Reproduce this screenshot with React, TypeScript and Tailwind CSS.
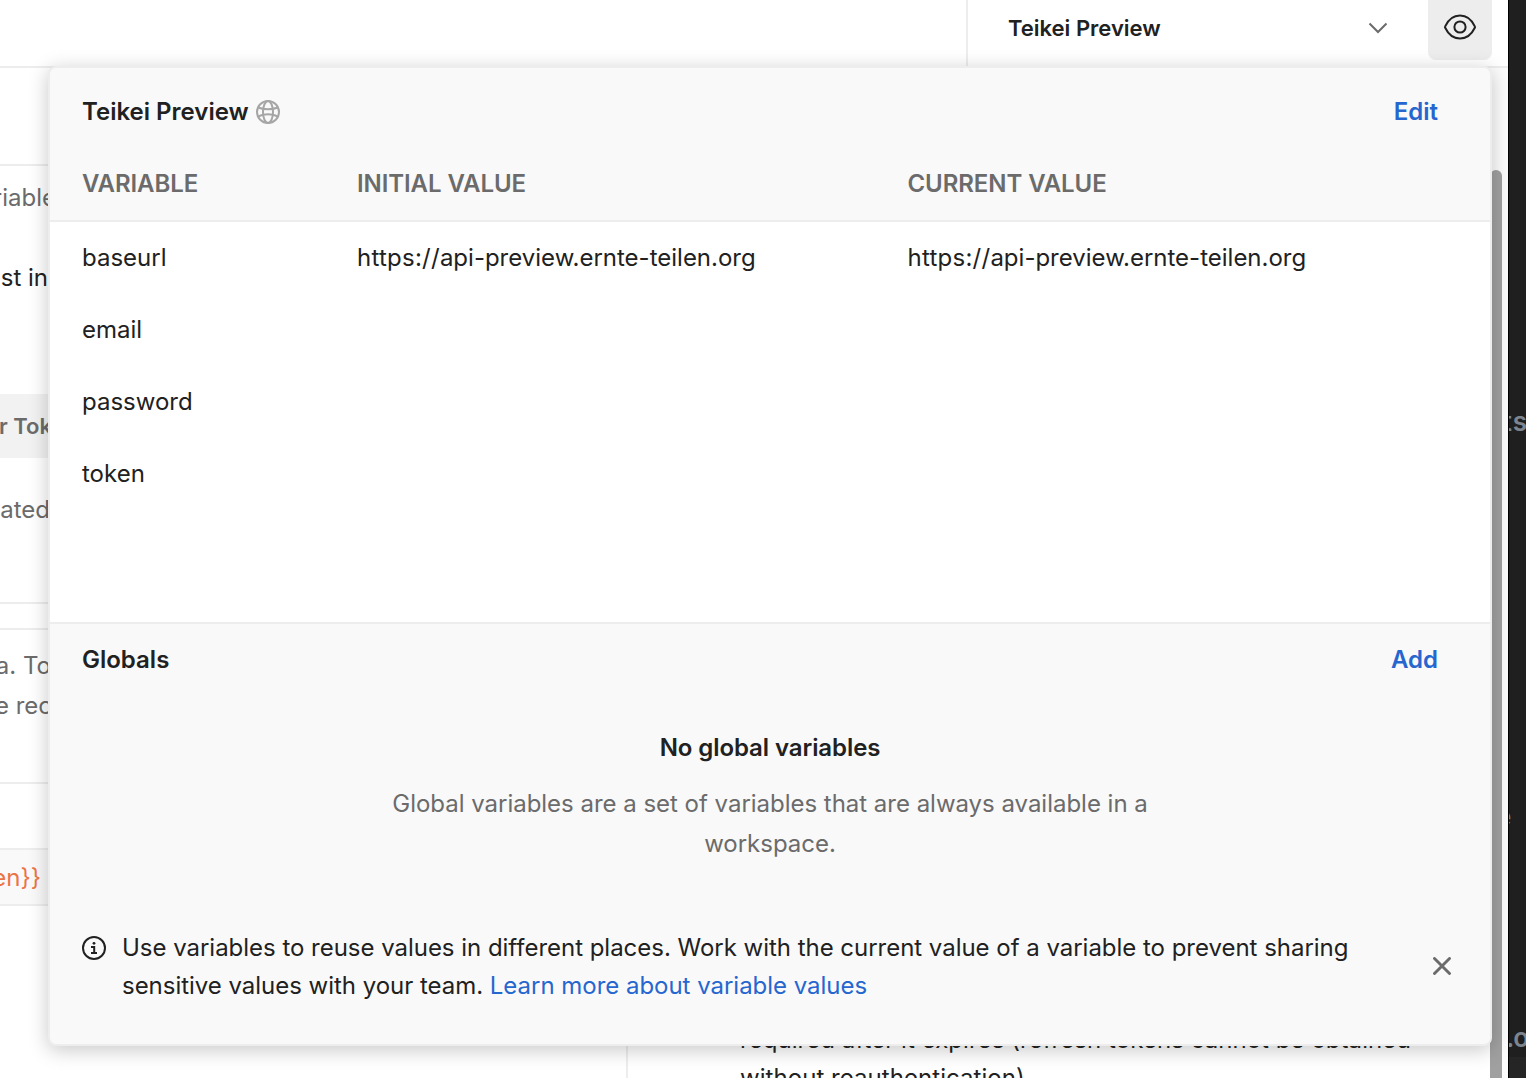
import { ReactNode } from "react";

function GlobeIcon() {
  return (
    <svg width="24" height="24" viewBox="0 0 24 24" fill="none" stroke="#a6a6a6" strokeWidth="2">
      <circle cx="12" cy="12" r="11" />
      <ellipse cx="12" cy="12" rx="5" ry="11" />
      <path d="M2 7.500C8 9.700 16 9.700 22 7.500M2 16.500C8 13.700 16 13.700 22 16.500" />
    </svg>
  );
}

function EyeIcon() {
  return (
    <svg width="32" height="26" viewBox="0 0 32 26" fill="none" stroke="#212121" strokeWidth="2">
      <path d="M1.2 12.4C4.5 5.4 10 1.6 16 1.6s11.500 3.800 14.800 10.800c.3.500.3.900 0 1.300C27.500 20.600 22 24.400 16 24.400S4.500 20.600 1.200 13.700c-.3-.4-.3-.8 0-1.300Z" />
      <circle cx="16" cy="13" r="5.6" />
    </svg>
  );
}

function InfoIcon() {
  return (
    <svg width="24" height="24" viewBox="0 0 24 24" fill="none" stroke="#212121" strokeWidth="2">
      <circle cx="12" cy="12" r="11" />
      <path d="M9 11h3.200v6M9 17h6" />
      <circle cx="12" cy="7.300" r="1.400" fill="#212121" stroke="none" />
    </svg>
  );
}

function Clip({ children, className }: { children?: ReactNode; className: string }) {
  return <div className={"flex shrink-0 items-center justify-end overflow-hidden whitespace-nowrap " + className}>{children}</div>;
}

const variables = [
  { name: "baseurl", scheme: "https://", host: "api-preview.ernte-teilen.org" },
  { name: "email", scheme: "", host: "" },
  { name: "password", scheme: "", host: "" },
  { name: "token", scheme: "", host: "" },
];

function Value({ scheme, host }: { scheme: string; host: string }) {
  return (
    <span>
      <span className="tracking-[0.25px]">{scheme}</span>
      {host}
    </span>
  );
}

function Popover() {
  return (
    <section className="absolute left-[48px] top-[66px] flex h-[980px] w-[1444px] flex-col overflow-hidden rounded-[8px] border-2 border-[#ededed] bg-[#f9f9f9] shadow-[0_4px_20px_rgba(0,0,0,0.22)]">
      <div className="flex h-[80px] items-center pl-8 pr-[52px] pt-2 font-semibold">
        <h2>Teikei Preview</h2>
        <span className="ml-[7px]"><GlobeIcon /></span>
        <button className="ml-auto text-[#2666cf]">Edit</button>
      </div>
      <div className="grid h-[74px] shrink-0 grid-cols-[275px_550.5px_1fr] items-center border-b-2 border-[#ededed] pl-8 font-semibold tracking-[-0.08px] text-[#6b6b6b]">
        <span>VARIABLE</span>
        <span>INITIAL VALUE</span>
        <span>CURRENT VALUE</span>
      </div>
      <div className="h-[402px] shrink-0 border-b-2 border-[#ededed] bg-white">
        {variables.map((v) => (
          <div key={v.name} className="grid h-[72px] grid-cols-[275px_550.5px_1fr] items-center pl-8">
            <span>{v.name}</span>
            <Value scheme={v.scheme} host={v.host} />
            <Value scheme={v.scheme} host={v.host} />
          </div>
        ))}
      </div>
      <div className="flex h-[72px] shrink-0 items-center justify-between pl-8 pr-[52px] font-semibold">
        <h2>Globals</h2>
        <button className="text-[#2666cf]">Add</button>
      </div>
      <div className="flex flex-col items-center pt-8 text-center leading-10 tracking-[-0.02px]">
        <h3 className="font-semibold tracking-[-0.08px]">No global variables</h3>
        <p className="mt-4 w-[800px] text-[#6b6b6b]">
          Global variables are a set of variables that are always available in a<br />workspace.
        </p>
      </div>
      <div className="mt-[65px] flex pl-8 leading-[38px]">
        <span className="mt-[7px]"><InfoIcon /></span>
        <p className="ml-4 w-[1311px] whitespace-nowrap tracking-[-0.025px]">
          Use variables to reuse values in different places. Work with the current value of a variable to prevent sharing<br />
          sensitive values with your team. <a className="text-[#2666cf]">Learn more about variable values</a>
        </p>
        <svg className="mt-[28px] shrink-0" width="18" height="18" viewBox="0 0 18 18" stroke="#6b6b6b" strokeWidth="2.900" strokeLinecap="round">
          <path d="M1.500 1.500l15 15M16.500 1.500l-15 15" />
        </svg>
      </div>
    </section>
  );
}

export default function App() {
  return (
    <div className="relative flex h-[1078px] w-[1526px] overflow-hidden bg-white font-['Inter',sans-serif] text-[24px] leading-[36px] text-[#212121]">
      <main className="flex w-[1508px] shrink-0 flex-col">
        <header className="flex h-[68px] shrink-0 border-b-2 border-[#ededed]">
          <div className="w-[966px]" />
          <div className="flex w-[462px] items-center border-l-2 border-[#ededed] pb-[10px] pl-10 text-[22px] font-semibold">
            <span>Teikei Preview</span>
            <svg className="ml-auto mr-[40px]" width="20" height="12" viewBox="0 0 20 12" fill="none" stroke="#6b6b6b" strokeWidth="2">
              <path d="M1.500 1.500L10 10l8.500-8.500" />
            </svg>
          </div>
          <div className="flex h-[60px] w-[64px] items-center justify-center rounded-b-[8px] bg-[#ededed] pb-[6px]"><EyeIcon /></div>
        </header>
        <div className="flex flex-1">
          <div className="flex w-[48px] flex-col text-[#6b6b6b]">
            <Clip className="h-[98px] border-b-2 border-[#ededed]" />
            <Clip className="h-16 w-[56px]">riable</Clip>
            <Clip className="h-24 text-[#212121]">st in</Clip>
            <div className="h-[68px]" />
            <Clip className="h-16 w-[52px] bg-[#f2f2f2] text-[22px] font-semibold">r Tok</Clip>
            <Clip className="h-[104px] w-[50px]">ated</Clip>
            <Clip className="h-[42px] border-b-2 border-[#ededed]" />
            <Clip className="h-[26px] border-b-2 border-[#ededed]" />
            <Clip className="mt-4 h-10 w-[51px]">a. To</Clip>
            <Clip className="h-10 w-[52px]">e rec</Clip>
            <Clip className="h-[58px] border-b-2 border-[#ededed]" />
            <Clip className="h-[66px] border-b-2 border-[#ededed]" />
            <Clip className="h-[56px] border-b-2 border-[#ededed] bg-[#f9f9f9] pr-[7px] pt-[2px] text-[#eb7447]">en{"}}"}</Clip>
          </div>
          <div className="w-[578px]" />
          <div className="flex flex-1 items-end border-l-2 border-[#ededed] pl-[112px]">
            <p className="-mb-[19px] whitespace-nowrap leading-[38px] tracking-[0.05px]">
              required after it expires (refresh tokens cannot be obtained<br />without reauthentication)
            </p>
          </div>
          <div className="w-[18px] bg-[#fcfcfc] pt-[102px]">
            <div className="h-full w-[12px] rounded-t-[6px] bg-[#a0a0a0]" />
          </div>
        </div>
      </main>
      <aside className="flex w-[18px] shrink-0 flex-col overflow-hidden border-l border-black bg-[#1f1f1f] text-[26px] font-semibold text-[#7d8590]">
        <Clip className="mt-[404px] h-9"><span className="-mr-[2px] tracking-[1px]">ts</span></Clip>
        <Clip className="mt-[359px] h-9 !justify-start"><span className="-ml-[13px]">e</span></Clip>
        <Clip className="mt-[185px] h-9"><span className="-mr-[2px] tracking-[-1px]">.o</span></Clip>
        <div className="mt-[1px] flex-1 bg-[#252525]" />
      </aside>
      <Popover />
    </div>
  );
}
